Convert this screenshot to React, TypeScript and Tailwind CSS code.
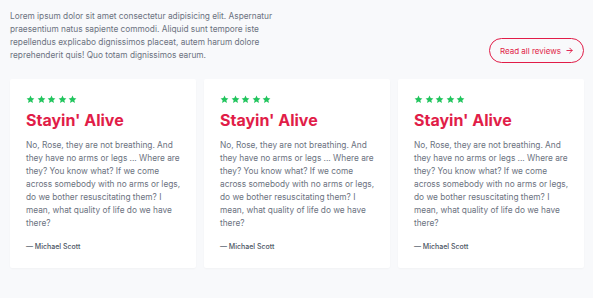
import React from 'react';

const QUOTE =
  'No, Rose, they are not breathing. And they have no arms or legs ... Where are they? You know what? If we come across somebody with no arms or legs, do we bother resuscitating them? I mean, what quality of life do we have there?';

function Star() {
  return (
    <svg viewBox="0 0 20 20" className="w-[9px] h-[9px] fill-[#22c55e]">
      <path d="M10 1.2l2.6 5.6 6.1.7-4.5 4.2 1.2 6-5.4-3-5.4 3 1.2-6L1.3 7.5l6.1-.7z" />
    </svg>
  );
}

function ReviewCard() {
  return (
    <div className="w-[186px] h-[189px] bg-white rounded-[2px] shadow-[0_1px_2px_rgba(0,0,0,0.03)] pl-4 pr-[10px] pt-[16px]">
      <div className="flex gap-[1.6px]">
        {[0, 1, 2, 3, 4].map(i => <Star key={i} />)}
      </div>
      <h3 className="mt-[6px] text-[16px] leading-[20px] font-bold text-[#e11d48]">Stayin' Alive</h3>
      <p className="mt-[9px] text-[8.3px] leading-[13px] text-[#6b7280]">{QUOTE}</p>
      <p className="mt-[12px] text-[7px] leading-[10px] font-medium text-[#4b5563]">— Michael Scott</p>
    </div>
  );
}

export default function App() {
  return (
    <div className="w-[593px] h-[298px] bg-[#f8f9fb] font-['Inter',sans-serif] pt-[10px]">
      <div className="flex items-end justify-between pl-[10px] pr-[9px]">
        <p className="w-[290px] text-[8.3px] leading-[13px] text-[#6b7280]">
          Lorem ipsum dolor sit amet consectetur adipisicing elit. Aspernatur praesentium natus sapiente commodi. Aliquid sunt tempore iste repellendus explicabo dignissimos placeat, autem harum dolore reprehenderit quis! Quo totam dignissimos earum.
        </p>
        <button className="mb-[-1px] w-[95px] h-[25px] rounded-full border border-[#e11d48] flex items-center justify-center gap-[5px] text-[8px] text-[#e11d48]">
          Read all reviews
          <svg viewBox="0 0 12 12" className="w-[7px] h-[7px] stroke-[#e11d48] fill-none" strokeWidth="1.6" strokeLinecap="round" strokeLinejoin="round">
            <path d="M1.5 6h9M6.5 2l4 4-4 4" />
          </svg>
        </button>
      </div>
      <div className="flex gap-[8px] pl-[10px] mt-[17px]">
        <ReviewCard />
        <ReviewCard />
        <ReviewCard />
      </div>
    </div>
  );
}
